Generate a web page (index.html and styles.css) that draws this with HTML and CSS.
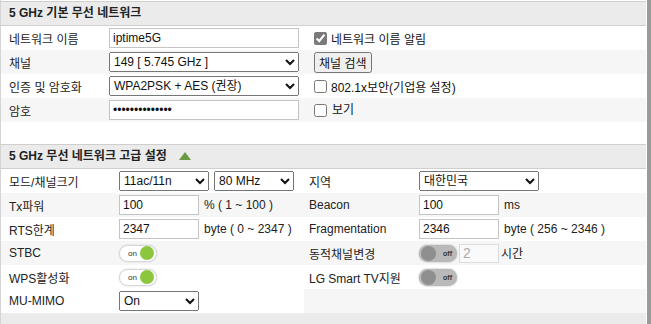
FILE: index.html
```html
<!DOCTYPE html>
<html lang="ko">
<head>
  <meta charset="UTF-8">
  <link rel="stylesheet" href="styles.css">
</head>
<body>
  <div class="frame">
    <div class="page">

      <!-- 기본 설정 -->
      <div class="sec-head">5 GHz 기본 무선 네트워크</div>
      <div class="basic">
        <div class="row">
          <div class="label">네트워크 이름</div>
          <div class="cell"><input class="text wide" type="text" value="iptime5G"></div>
          <div class="cell"><label class="check"><input class="fixed" type="checkbox" checked>네트워크 이름 알림</label></div>
        </div>
        <div class="row alt">
          <div class="label">채널</div>
          <div class="cell">
            <select class="sel wide"><option>149 [ 5.745 GHz ]</option></select>
          </div>
          <div class="cell"><button class="btn">채널 검색</button></div>
        </div>
        <div class="row">
          <div class="label">인증 및 암호화</div>
          <div class="cell">
            <select class="sel wide"><option>WPA2PSK + AES (권장)</option></select>
          </div>
          <div class="cell"><label class="check"><input type="checkbox">802.1x보안(기업용 설정)</label></div>
        </div>
        <div class="row alt">
          <div class="label">암호</div>
          <div class="cell"><input class="text wide" type="password" value="12345678901234"></div>
          <div class="cell"><label class="check show"><input type="checkbox"><span>보기</span></label></div>
        </div>
      </div>

      <!-- 고급 설정 -->
      <div class="sec-head adv-head">5 GHz 무선 네트워크 고급 설정 <span class="tri"></span></div>
      <div class="adv">
        <div class="row">
          <div class="label">모드/채널크기</div>
          <div class="cell">
            <select class="sel mode"><option>11ac/11n</option></select>
            <select class="sel bw"><option>80 MHz</option></select>
          </div>
          <div class="label2">지역</div>
          <div class="cell"><select class="sel region"><option>대한민국</option></select></div>
        </div>
        <div class="row alt">
          <div class="label">Tx파워</div>
          <div class="cell"><input class="text short" type="text" value="100"><span class="unit">% ( 1 ~ 100 )</span></div>
          <div class="label2">Beacon</div>
          <div class="cell"><input class="text short" type="text" value="100"><span class="unit">ms</span></div>
        </div>
        <div class="row">
          <div class="label">RTS한계</div>
          <div class="cell"><input class="text short" type="text" value="2347"><span class="unit">byte ( 0 ~ 2347 )</span></div>
          <div class="label2">Fragmentation</div>
          <div class="cell"><input class="text short" type="text" value="2346"><span class="unit">byte ( 256 ~ 2346 )</span></div>
        </div>
        <div class="row alt">
          <div class="label">STBC</div>
          <div class="cell"><span class="toggle on"><span class="txt">on</span><span class="knob"></span></span></div>
          <div class="label2">동적채널변경</div>
          <div class="cell">
            <span class="toggle off"><span class="knob"></span><span class="txt">off</span></span>
            <input class="text hours" type="text" value="2" disabled>
            <span class="unit up">시간</span>
          </div>
        </div>
        <div class="row">
          <div class="label">WPS활성화</div>
          <div class="cell"><span class="toggle on"><span class="txt">on</span><span class="knob"></span></span></div>
          <div class="label2">LG Smart TV지원</div>
          <div class="cell"><span class="toggle off"><span class="knob"></span><span class="txt">off</span></span></div>
        </div>
        <div class="row alt">
          <div class="label blank">MU-MIMO</div>
          <div class="cell blank"><select class="sel short"><option>On</option></select></div>
          <div class="label2"></div>
          <div class="cell"></div>
        </div>
      </div>

      <div class="foot"></div>
    </div>
    <div class="edge"></div>
  </div>
</body>
</html>
```

FILE: styles.css
```css
/* Reset */
* {
  margin: 0;
  padding: 0;
  box-sizing: border-box;
}

body {
  font-family: "Liberation Sans", "Noto Sans CJK KR", sans-serif;
  font-size: 12px;
  color: #222;
  background-color: #fff;
}

.frame {
  display: flex;
  height: 324px;
  overflow: hidden;
}

.page {
  width: 646px;
  padding-top: 1px;
  border-left: 1px solid #d4d4d4;
}

.edge {
  width: 4px;
  margin-left: 1px;
  background-color: #9a9a9a;
}

/* Section headers */
.sec-head {
  height: 25px;
  line-height: 23px;
  padding-left: 8px;
  font-weight: bold;
  font-size: 12px;
  background-color: #ebebeb;
  border-top: 1px solid #cfcfcf;
  border-bottom: 1px solid #cfcfcf;
  color: #222;
}

.adv-head {
  margin-top: 22px;
  display: flex;
  align-items: center;
}

.tri {
  display: inline-block;
  margin-left: 12px;
  margin-top: -1px;
  width: 0;
  height: 0;
  border-left: 6px solid transparent;
  border-right: 6px solid transparent;
  border-bottom: 8px solid #6b9a44;
}

/* Rows */
.row {
  display: grid;
  height: 24px;
  align-items: center;
  background-color: #fff;
}

.row.alt {
  background-color: #f6f6f6;
}

.basic .row {
  grid-template-columns: 103px 205px 1fr;
}

.adv .row {
  grid-template-columns: 113px 190px 110px 1fr;
}

.label, .label2 {
  padding-left: 8px;
  white-space: nowrap;
}

.label2 {
  padding-left: 5px;
}

.cell {
  display: flex;
  align-items: center;
  height: 100%;
  padding-left: 5px;
  white-space: nowrap;
}

.row .blank {
  background-color: #fff;
  height: 100%;
  display: flex;
  align-items: center;
}

/* Form controls */
.text {
  height: 20px;
  border: 1px solid #c4c4c4;
  padding: 0 3px;
  font-family: "Liberation Sans", sans-serif;
  font-size: 12px;
  color: #111;
  background-color: #fff;
}

.text.wide { width: 190px; }
.text.short { width: 80px; }

.text.hours {
  width: 40px;
  height: 19px;
  margin-left: 2px;
  font-size: 14px;
  color: #aaa;
  border-color: #dcdcdc;
  background-color: #fafafa;
}

.sel {
  height: 20px;
  font-family: "Liberation Sans", "Noto Sans CJK KR", sans-serif;
  font-size: 12px;
  color: #111;
}

.sel.wide { width: 190px; }
.sel.mode { width: 90px; }
.sel.bw { width: 80px; margin-left: 5px; }
.sel.region { width: 120px; }
.sel.short { width: 80px; }

.unit {
  margin-left: 5px;
}

.unit.up {
  align-self: flex-start;
  margin-left: 2px;
  margin-top: 3px;
}

.check {
  display: flex;
  align-items: center;
  color: #111;
}

.check input {
  width: 13px;
  height: 13px;
  margin: 0 4px 0 0;
}

/* 고정된 체크박스 (회색) */
.check input.fixed {
  accent-color: #7a7a7a;
}

.check.show span {
  margin-left: 1px;
  margin-top: -4px;
}

.btn {
  height: 21px;
  padding: 0 3px;
  font-family: "Liberation Sans", "Noto Sans CJK KR", sans-serif;
  font-size: 12px;
  color: #111;
}

/* Toggle switches */
.toggle {
  display: inline-flex;
  align-items: center;
  width: 38px;
  height: 17px;
  border-radius: 9px;
  font-size: 8px;
  color: #333;
}

.toggle.on {
  justify-content: space-between;
  padding: 0 2px 0 8px;
  background-color: #fff;
  border: 1px solid #d6d6d6;
  box-shadow: 0 0 2px rgba(0, 0, 0, 0.15);
}

.toggle.off {
  justify-content: space-between;
  padding: 0 5px 0 2px;
  background-color: #b9b9b9;
  box-shadow: 0 0 2px #a8a8a8;
  font-weight: bold;
}

.toggle .knob {
  width: 14px;
  height: 14px;
  border-radius: 50%;
}

.toggle.on .knob {
  background-color: #8cc63e;
}

.toggle.off .knob {
  width: 15px;
  height: 15px;
  background-color: #8f8f8f;
}

.toggle.off .txt {
  font-size: 7px;
}

.foot {
  height: 20px;
  background-color: #ebebeb;
}
```
